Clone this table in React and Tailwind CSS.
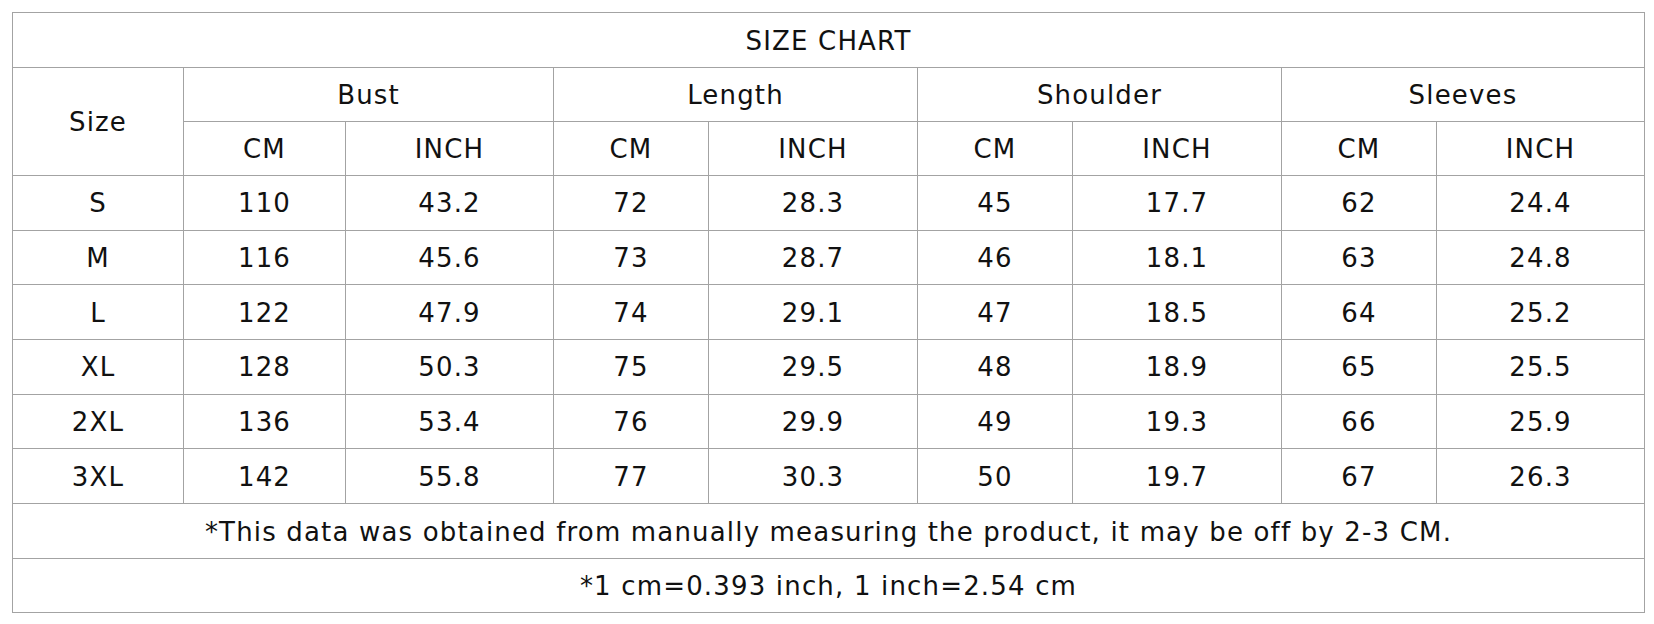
const groups = ["Bust", "Length", "Shoulder", "Sleeves"];

const rows = [
  ["S", 110, "43.2", 72, "28.3", 45, "17.7", 62, "24.4"],
  ["M", 116, "45.6", 73, "28.7", 46, "18.1", 63, "24.8"],
  ["L", 122, "47.9", 74, "29.1", 47, "18.5", 64, "25.2"],
  ["XL", 128, "50.3", 75, "29.5", 48, "18.9", 65, "25.5"],
  ["2XL", 136, "53.4", 76, "29.9", 49, "19.3", 66, "25.9"],
  ["3XL", 142, "55.8", 77, "30.3", 50, "19.7", 67, "26.3"],
];

const widths = [171, 162, 208, 155, 209, 155, 209, 155, 208];

const cell = "border border-[#a3a3a3] text-center align-middle p-0 pt-[2px]";

export default function App() {
  return (
    <div className="w-[1654px] h-[624px] bg-white pt-[12px] pl-[12px]">
      <table
        className="table-fixed border-collapse w-[1632px] text-[#111] text-[26px] tracking-[0.045em]"
        style={{ fontFamily: '"DejaVu Sans", Arial, sans-serif' }}
      >
        <colgroup>
          {widths.map((w, i) => (
            <col key={i} style={{ width: w }} />
          ))}
        </colgroup>
        <tbody>
          <tr className="h-[55px]">
            <td colSpan={9} className={cell}>SIZE CHART</td>
          </tr>
          <tr className="h-[54px]">
            <td rowSpan={2} className={cell}>Size</td>
            {groups.map((g) => (
              <td key={g} colSpan={2} className={cell}>{g}</td>
            ))}
          </tr>
          <tr className="h-[54px]">
            {groups.map((g) => (
              <>
                <td key={g + "cm"} className={cell}>CM</td>
                <td key={g + "in"} className={cell}>INCH</td>
              </>
            ))}
          </tr>
          {rows.map((r) => (
            <tr key={r[0]} className="h-[54.7px]">
              {r.map((v, i) => (
                <td key={i} className={cell}>{v}</td>
              ))}
            </tr>
          ))}
          <tr className="h-[55px]">
            <td colSpan={9} className={cell}>
              *This data was obtained from manually measuring the product, it may be off by 2-3 CM.
            </td>
          </tr>
          <tr className="h-[54px]">
            <td colSpan={9} className={cell}>*1 cm=0.393 inch, 1 inch=2.54 cm</td>
          </tr>
        </tbody>
      </table>
    </div>
  );
}
